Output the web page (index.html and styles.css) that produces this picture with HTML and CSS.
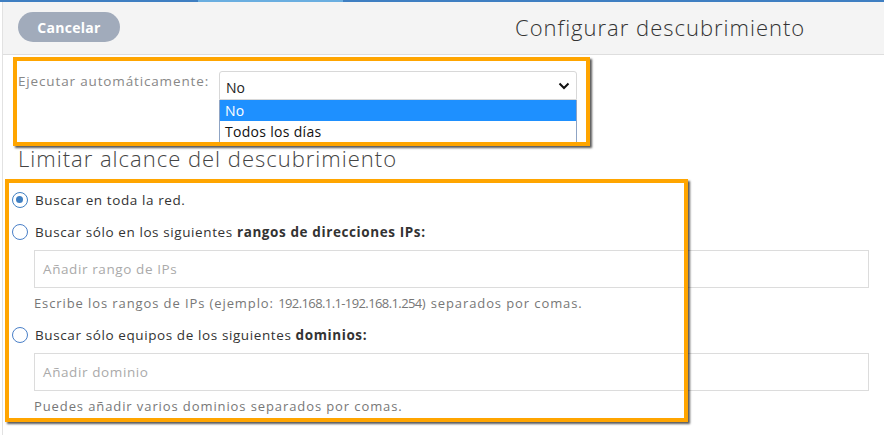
FILE: index.html
```html
<!DOCTYPE html>
<html lang="es">

<head>
    <meta charset="UTF-8">
    <meta name="viewport" content="width=device-width, initial-scale=1.0">
    <title>Configurar descubrimiento</title>
    <link rel="stylesheet" href="styles.css">
</head>

<body>
    <div class="topbar"></div>
    <section id="page">
        <header class="head">
            <button class="btn-cancel">Cancelar</button>
            <h1 class="title">Configurar descubrimiento</h1>
        </header>

        <main class="content">
            <div class="row-auto">
                <label class="lbl">Ejecutar automáticamente:</label>
                <div class="select-wrap">
                    <div class="select">
                        <span>No</span>
                        <svg class="chev" width="12" height="8" viewBox="0 0 12 8">
                            <path d="M1.5 1.5 L6 6 L10.5 1.5" fill="none" stroke="#111" stroke-width="2" />
                        </svg>
                    </div>
                    <ul class="options">
                        <li class="opt active">No</li>
                        <li class="opt">Todos los días</li>
                    </ul>
                </div>
            </div>

            <h2 class="subtitle">Limitar alcance del descubrimiento</h2>

            <div class="radio-row">
                <span class="radio checked"></span>
                <span>Buscar en toda la red.</span>
            </div>
            <div class="radio-row">
                <span class="radio"></span>
                <span>Buscar sólo en los siguientes <b>rangos de direcciones IPs:</b></span>
            </div>
            <div class="field">
                <div class="input">Añadir rango de IPs</div>
                <p class="help">Escribe los rangos de IPs (ejemplo: <span class="nums">192.168.1.1-192.168.1.254</span>) separados por comas.</p>
            </div>
            <div class="radio-row">
                <span class="radio"></span>
                <span>Buscar sólo equipos de los siguientes <b>dominios:</b></span>
            </div>
            <div class="field">
                <div class="input">Añadir dominio</div>
                <p class="help">Puedes añadir varios dominios separados por comas.</p>
            </div>
        </main>

        <!-- highlight boxes -->
        <div class="mark mark-auto"></div>
        <div class="mark mark-scope"></div>
    </section>
</body>

</html>
```

FILE: styles.css
```css
body {
    margin: 0;
    background: #fff;
    font-family: "Open Sans", "Noto Sans", sans-serif;
    color: #333;
}

.topbar {
    height: 2px;
    background: linear-gradient(to right, #3f7fc2 0, #3f7fc2 198px, #6aaee0 198px, #6aaee0 343px, #3f7fc2 343px);
}

#page {
    position: relative;
    margin-left: 2px;
    border-left: 1px solid #e2e2e2;
    height: 433px;
}

.head {
    display: flex;
    align-items: center;
    height: 52px;
    background: #f4f4f4;
    border-bottom: 1px solid #dedede;
    padding-left: 15px;
}

.btn-cancel {
    width: 102px;
    height: 30px;
    border: 0;
    border-radius: 15px;
    background: #a1abbb;
    color: #fff;
    font-family: "Open Sans", sans-serif;
    font-weight: 700;
    font-size: 14px;
    letter-spacing: 0.3px;
    margin-top: -2px;
}

.title {
    margin: 0 0 2px 395px;
    font-weight: 300;
    font-size: 22px;
    color: #333;
    letter-spacing: 1px;
}

.content {
    padding: 16px 0 0 15px;
}

.row-auto {
    display: flex;
    align-items: flex-start;
}

.lbl {
    width: 201px;
    font-size: 13.5px;
    color: #888;
    letter-spacing: 0.85px;
    padding-top: 1px;
}

.select-wrap {
    position: relative;
}

.select {
    display: flex;
    align-items: center;
    justify-content: space-between;
    width: 344px;
    height: 27px;
    padding: 0 6px 0 6px;
    border: 1px solid #d8d8d8;
    border-radius: 3px 3px 0 0;
    font-size: 14px;
    color: #222;
}

.select span {
    padding-top: 3px;
}

.chev {
    margin-top: 1px;
}

.options {
    position: absolute;
    top: 29px;
    left: 0;
    width: 356px;
    margin: 0;
    padding: 0;
    list-style: none;
    background: #fff;
    border: 1px solid #8fa4c4;
    border-top: 0;
}

.opt {
    height: 21px;
    line-height: 21px;
    padding-left: 5px;
    font-size: 14px;
    color: #111;
    letter-spacing: 0.3px;
}

.opt.active {
    background: #1e90ff;
    color: #fff;
}

.subtitle {
    margin: 45px 0 13px 0;
    font-weight: 300;
    font-size: 22px;
    color: #444;
    line-height: 26px;
    letter-spacing: 1px;
}

.radio-row {
    display: flex;
    align-items: center;
    height: 32px;
    margin-left: -6px;
    font-size: 13.5px;
    color: #333;
    letter-spacing: 0.6px;
}

.radio {
    box-sizing: border-box;
    width: 16px;
    height: 16px;
    border: 1px solid #4a80c8;
    border-radius: 50%;
    margin-right: 7px;
    position: relative;
}

.radio.checked {
    border: 1.5px solid #3f7fc2;
}

.radio.checked:after {
    content: "";
    position: absolute;
    left: 3px;
    top: 3px;
    width: 7px;
    height: 7px;
    border-radius: 50%;
    background: #3f7fc2;
}

.field {
    padding: 2px 0 0 16px;
}

.input {
    box-sizing: border-box;
    width: 835px;
    height: 38px;
    border: 1px solid #dcdcdc;
    padding: 9px 0 0 8px;
    font-size: 13.5px;
    color: #aaa;
    letter-spacing: 0.6px;
}

.help {
    margin: 6px 0 7px 0;
    font-size: 13px;
    line-height: 18px;
    color: #777;
    letter-spacing: 0.9px;
}

.help .nums {
    letter-spacing: -0.6px;
}

.mark {
    position: absolute;
    border: 4px solid #ffa500;
    box-shadow: 2px 2px 2px rgba(0, 0, 0, 0.65);
}

.mark-auto {
    left: 10px;
    top: 55px;
    width: 569px;
    height: 81px;
}

.mark-scope {
    left: 2px;
    top: 177px;
    width: 675px;
    height: 235px;
}
```
